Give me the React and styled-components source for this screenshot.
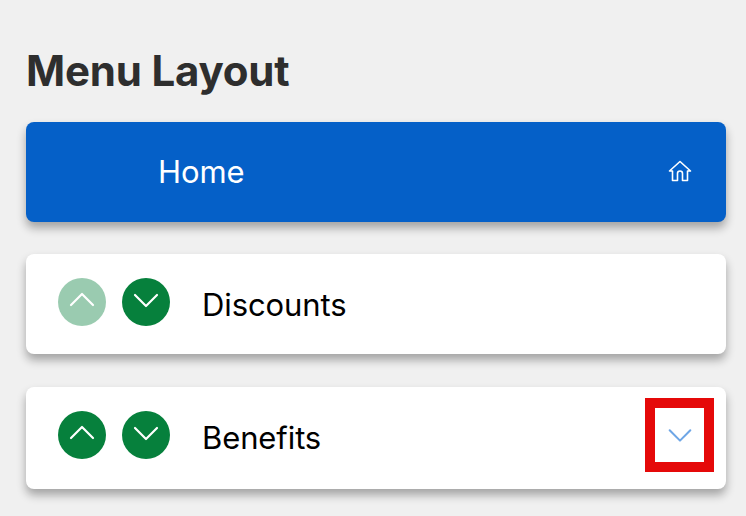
import styled, { createGlobalStyle } from "styled-components";

const GlobalStyle = createGlobalStyle`
  html, body {
    margin: 0;
    padding: 0;
    background-color: #f0f0f0;
  }
  body {
    font-family: Inter, "Liberation Sans", sans-serif;
  }
`;

const Page = styled.div`
  width: 746px;
  height: 516px;
  box-sizing: border-box;
  padding: 46px 20px 0 26px;
  overflow: hidden;
`;

const Title = styled.h1`
  margin: 0 0 26px;
  height: 50px;
  font-size: 42px;
  line-height: 50px;
  font-weight: 700;
  letter-spacing: -0.2px;
  color: #2e2e2e;
`;

const List = styled.div`
  display: flex;
  flex-direction: column;
  gap: 32px;
`;

const Row = styled.div`
  position: relative;
  display: flex;
  align-items: center;
  height: ${(p) => p.$height || 100}px;
  box-sizing: border-box;
  padding: 0 32px ${(p) => (p.$height ? p.$height - 100 : 0)}px;
  margin-top: ${(p) => p.$nudge || 0}px;
  border-radius: 8px;
  background-color: ${(p) => (p.$active ? "#0560c8" : "#ffffff")};
  color: ${(p) => (p.$active ? "#ffffff" : "#000000")};
  box-shadow: 0 6px 10px rgba(0, 0, 0, 0.32);
`;

const Arrows = styled.div`
  display: flex;
  gap: 16px;
  margin-right: 32px;
  margin-bottom: 4px;
`;

const RoundButton = styled.button`
  display: flex;
  align-items: center;
  justify-content: center;
  width: 48px;
  height: 48px;
  padding: 0 0 4px;
  border: none;
  border-radius: 50%;
  background-color: #06803c;
  opacity: ${(p) => (p.disabled ? 0.4 : 1)};
`;

const Label = styled.span`
  flex: 1;
  font-size: 31px;
  line-height: 40px;
  font-weight: 400;
  letter-spacing: -0.1px;
  padding-left: ${(p) => p.$indent || 0}px;

  ${Arrows} ~ & {
    padding-top: 2px;
  }
`;

const HomeIcon = styled.svg`
  width: 26px;
  height: 26px;
  margin: -2px 1px 0 0;
  fill: none;
  stroke: #ffffff;
  stroke-width: 1.6;
  stroke-linejoin: round;
  stroke-linecap: round;
`;

const Chevron = styled.svg`
  width: ${(p) => p.$size || 32}px;
  height: ${(p) => p.$size || 32}px;
  fill: none;
  stroke: ${(p) => p.$color || "#ffffff"};
  stroke-width: 2.2;
  stroke-linecap: round;
  stroke-linejoin: round;
`;

const Highlight = styled.div`
  position: absolute;
  left: 619px;
  top: 11px;
  width: 69px;
  height: 74px;
  box-sizing: border-box;
  border: 10px solid #e50909;
  display: flex;
  align-items: center;
  justify-content: center;
`;

function Up() {
  return (
    <Chevron viewBox="0 0 32 32">
      <path d="M5 21 L16 10 L27 21" />
    </Chevron>
  );
}

function Down({ color, size }) {
  return (
    <Chevron viewBox="0 0 32 32" $color={color} $size={size}>
      <path d="M5 11 L16 22 L27 11" />
    </Chevron>
  );
}

export default function App() {
  return (
    <Page>
      <GlobalStyle />
      <Title>Menu Layout</Title>
      <List>
        <Row $active>
          <Label $indent={100}>Home</Label>
          <HomeIcon viewBox="0 0 26 26">
            <path d="M2.5 13 L13 3.5 L23.5 13 H20.5 V22.5 H15.5 V15.5 Q15.5 13 13 13 Q10.5 13 10.5 15.5 V22.5 H5.5 V13 Z" />
          </HomeIcon>
        </Row>
        <Row>
          <Arrows>
            <RoundButton disabled>
              <Up />
            </RoundButton>
            <RoundButton>
              <Down />
            </RoundButton>
          </Arrows>
          <Label>Discounts</Label>
        </Row>
        <Row $height={102} $nudge={1}>
          <Arrows>
            <RoundButton>
              <Up />
            </RoundButton>
            <RoundButton>
              <Down />
            </RoundButton>
          </Arrows>
          <Label>Benefits</Label>
          <Highlight>
            <Down color="#6ea6e6" size={30} />
          </Highlight>
        </Row>
      </List>
    </Page>
  );
}
